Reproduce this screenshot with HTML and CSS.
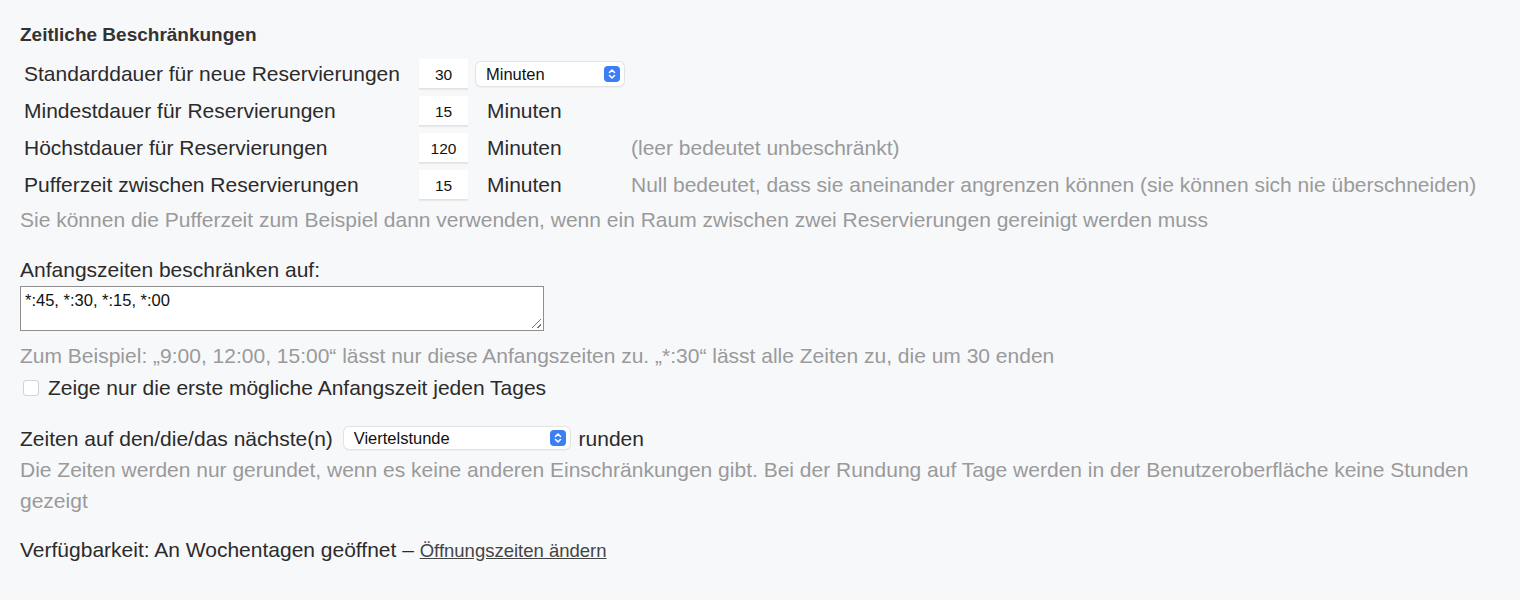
FILE: index.html
```html
<!DOCTYPE html>
<html lang="de">
<head>
    <meta charset="UTF-8">
    <title>Zeitliche Beschränkungen</title>
    <link rel="stylesheet" href="styles.css">
</head>
<body>
    <main class="settings">
        <h3 class="section-title">Zeitliche Beschränkungen</h3>
        <div class="limits">
            <div class="row">
                <span class="label">Standarddauer für neue Reservierungen</span>
                <span class="num">30</span>
                <span class="select small">Minuten<i class="stepper"><svg viewBox="0 0 16 16"><path d="M5.5 6.5 8 4l2.5 2.5M5.5 9.5 8 12l2.5-2.5"/></svg></i></span>
                <span class="hint"></span>
            </div>
            <div class="row">
                <span class="label">Mindestdauer für Reservierungen</span>
                <span class="num">15</span>
                <span class="unit">Minuten</span>
                <span class="hint"></span>
            </div>
            <div class="row">
                <span class="label">Höchstdauer für Reservierungen</span>
                <span class="num">120</span>
                <span class="unit">Minuten</span>
                <span class="hint">(leer bedeutet unbeschränkt)</span>
            </div>
            <div class="row">
                <span class="label">Pufferzeit zwischen Reservierungen</span>
                <span class="num">15</span>
                <span class="unit">Minuten</span>
                <span class="hint">Null bedeutet, dass sie aneinander angrenzen können (sie können sich nie überschneiden)</span>
            </div>
        </div>
        <p class="note buffer">Sie können die Pufferzeit zum Beispiel dann verwenden, wenn ein Raum zwischen zwei Reservierungen gereinigt werden muss</p>

        <p class="field-label">Anfangszeiten beschränken auf:</p>
        <div class="textarea">*:45, *:30, *:15, *:00<i class="grip"></i></div>
        <p class="note example">Zum Beispiel: „9:00, 12:00, 15:00“ lässt nur diese Anfangszeiten zu. „*:30“ lässt alle Zeiten zu, die um 30 enden</p>
        <label class="check"><i class="box"></i>Zeige nur die erste mögliche Anfangszeit jeden Tages</label>

        <div class="round">
            Zeiten auf den/die/das nächste(n)
            <span class="select wide">Viertelstunde<i class="stepper"><svg viewBox="0 0 16 16"><path d="M5.5 6.5 8 4l2.5 2.5M5.5 9.5 8 12l2.5-2.5"/></svg></i></span>
            runden
        </div>
        <p class="note">Die Zeiten werden nur gerundet, wenn es keine anderen Einschränkungen gibt. Bei der Rundung auf Tage werden in der Benutzeroberfläche keine Stunden gezeigt</p>

        <p class="availability">Verfügbarkeit: An Wochentagen geöffnet – <a href="#">Öffnungszeiten ändern</a></p>
    </main>
</body>
</html>
```

FILE: styles.css
```css
body {
    margin: 0;
    background-color: #f7f8fa;
    font-family: "Liberation Sans", Arial, sans-serif;
    color: #2b2b2b;
    font-size: 21px;
    line-height: 31px;
}
.settings {
    padding: 19px 20px 0 20px;
}
.section-title {
    margin: 0 0 5px 0;
    font-size: 19px;
    font-weight: bold;
    color: #333;
}
.limits {
    padding-left: 4px;
}
.row {
    display: grid;
    grid-template-columns: 395px 57px 155px 1fr;
    align-items: center;
    height: 37px;
}
.num {
    box-sizing: border-box;
    width: 49px;
    height: 30px;
    line-height: 31px;
    background: #fff;
    border-bottom: 1px solid #e2e2e2;
    box-shadow: 0 1px 1px rgba(0, 0, 0, 0.06);
    text-align: center;
    font-size: 15.5px;
    color: #111;
}
.unit {
    padding-left: 11px;
}
.hint {
    color: #9a9a9a;
}
.select {
    display: inline-flex;
    align-items: center;
    justify-content: space-between;
    box-sizing: border-box;
    background: #fff;
    border-radius: 5px;
    box-shadow: 0 0 0 1px #e3e3e3, 0 1px 2px rgba(0, 0, 0, 0.12);
    font-size: 16.5px;
    line-height: 20px;
    color: #111;
    padding: 0 4px 0 10px;
}
.select.small {
    width: 148px;
    height: 24px;
}
.select.wide {
    width: 226px;
    height: 22px;
    margin: 0 3px 0 5px;
    vertical-align: 2px;
}
.stepper {
    display: block;
    width: 16px;
    height: 16px;
    border-radius: 4px;
    background: #3a7ff5;
}
.stepper svg {
    display: block;
    width: 16px;
    height: 16px;
    fill: none;
    stroke: #fff;
    stroke-width: 1.6;
    stroke-linecap: round;
    stroke-linejoin: round;
}
.note {
    margin: 0;
    color: #9a9a9a;
}
.note.buffer {
    margin-top: 1px;
}
.field-label {
    margin: 19px 0 1px 0;
}
.textarea {
    position: relative;
    box-sizing: border-box;
    width: 524px;
    height: 45px;
    background: #fff;
    border: 1px solid #8f8f8f;
    padding: 2px 4px;
    font-size: 16.5px;
    line-height: 22px;
    color: #111;
}
.grip {
    position: absolute;
    right: 2px;
    bottom: 2px;
    width: 9px;
    height: 9px;
    background: linear-gradient(135deg, transparent 45%, #777 45%, #777 55%, transparent 55%, transparent 75%, #777 75%, #777 85%, transparent 85%);
}
.note.example {
    margin-top: 9px;
}
.check {
    display: flex;
    align-items: center;
    margin-top: 1px;
}
.box {
    box-sizing: border-box;
    width: 16px;
    height: 16px;
    margin: 0 9px 0 3px;
    border: 1px solid #d3d3d3;
    border-radius: 3px;
    background: #fff;
}
.round {
    margin-top: 20px;
}
.availability {
    margin: 18px 0 0 0;
}
.availability a {
    color: #444;
    font-size: 18.5px;
}
```
